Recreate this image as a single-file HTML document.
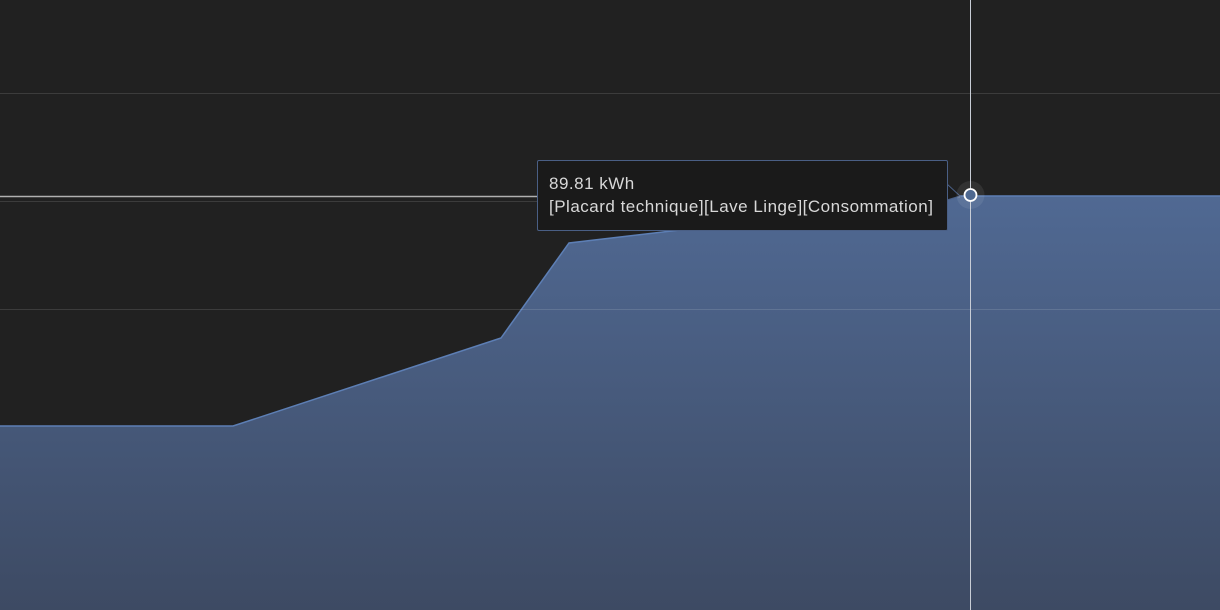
<!DOCTYPE html>
<html><head><meta charset="utf-8"><style>
html,body{margin:0;padding:0;background:#212121;width:1220px;height:610px;overflow:hidden;}
svg{position:absolute;left:0;top:0}
.tip{position:absolute;left:537px;top:160px;width:411px;height:71px;background:#1a1a1a;border:1px solid #4a5f85;border-radius:2px;box-sizing:border-box;padding:11px 0 0 11px;font-family:"Liberation Sans",sans-serif;font-size:17px;letter-spacing:0.5px;line-height:23px;color:#d8d8d8;white-space:nowrap;}
</style></head><body>
<svg width="1220" height="610">
<defs><linearGradient id="g" x1="0" y1="0" x2="0" y2="1">
<stop offset="0" stop-color="#506993"/><stop offset="1" stop-color="#3d4a63"/></linearGradient></defs>
<line x1="0" y1="93.5" x2="1220" y2="93.5" stroke="#3c3c3c"/>
<line x1="0" y1="201.5" x2="1220" y2="201.5" stroke="#3c3c3c"/>
<path d="M0,426 L233,426 L501,338 L569,243 L680,230 L955,196 L1220,196 L1220,610 L0,610Z" fill="url(#g)"/>
<path d="M0,426 L233,426 L501,338 L569,243 L680,230 L955,196 L1220,196" fill="none" stroke="#5d7fb5" stroke-width="1.5"/>
<line x1="0" y1="309.5" x2="1220" y2="309.5" stroke="#ffffff" stroke-opacity="0.12"/>
<line x1="0" y1="196.5" x2="960" y2="196.5" stroke="#b0b0b0" stroke-width="1.5"/>
<line x1="970.5" y1="0" x2="970.5" y2="610" stroke="#c8cdd6" stroke-width="1"/>
<path d="M947,184 L960,196 L947,200" fill="#1a1a1a" stroke="#4a5f85"/>
<circle cx="970.5" cy="195" r="14" fill="#ffffff" fill-opacity="0.08"/>
<circle cx="970.5" cy="195" r="6" fill="#4e6890" stroke="#ffffff" stroke-width="1.8"/>
</svg>
<div class="tip">89.81 kWh<br>[Placard technique][Lave Linge][Consommation]</div>
</body></html>
